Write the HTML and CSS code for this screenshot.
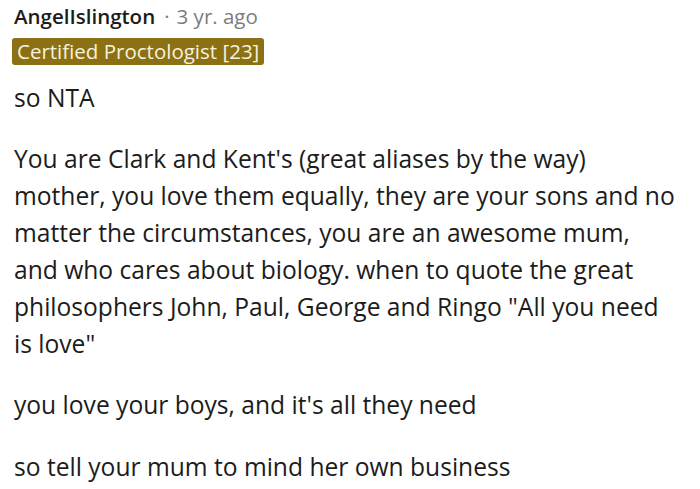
FILE: index.html
```html
<!DOCTYPE html>
<html lang="en">
<head>
<meta charset="utf-8">
<title>Comment</title>
<link rel="stylesheet" href="styles.css">
</head>
<body>
<div class="comment">
  <div class="meta">
    <span class="author">AngelIslington</span>
    <span class="dot">·</span>
    <span class="time">3 yr. ago</span>
  </div>
  <div class="flair">Certified Proctologist [23]</div>
  <div class="body">
    <p>so NTA</p>
    <p>You are Clark and Kent's (great aliases by the way) mother, you love them equally, they are your sons and no matter the circumstances, you are an awesome mum, and who cares about biology. when to quote the great philosophers John, Paul, George and Ringo "All you need is love"</p>
    <p>you love your boys, and it's all they need</p>
    <p>so tell your mum to mind her own business</p>
  </div>
</div>
</body>
</html>
```
FILE: styles.css
```css
html, body {
  margin: 0;
  padding: 0;
  background: #ffffff;
}
.comment {
  padding: 3px 0 0 14px;
  width: 662px;
  font-family: "Open Sans", "Noto Sans", sans-serif;
  color: #1c1c1c;
}
.meta {
  display: flex;
  align-items: baseline;
  font-size: 20.5px;
  line-height: 26px;
}
.author {
  font-weight: 600;
  color: #1c1c1c;
}
.dot {
  color: #7c7c7c;
  margin: 0 7px 0 9px;
}
.time {
  color: #7c7c7c;
}
.flair {
  display: inline-block;
  margin-top: 9px;
  margin-left: -2px;
  padding: 0 5px;
  background: #8b7114;
  color: #f6f1de;
  font-size: 20.5px;
  line-height: 27px;
  border-radius: 3px;
}
.body {
  margin-top: 15px;
  font-size: 24.6px;
  line-height: 1.5;
}
.body p {
  margin: 0 0 1em 0;
}
```
